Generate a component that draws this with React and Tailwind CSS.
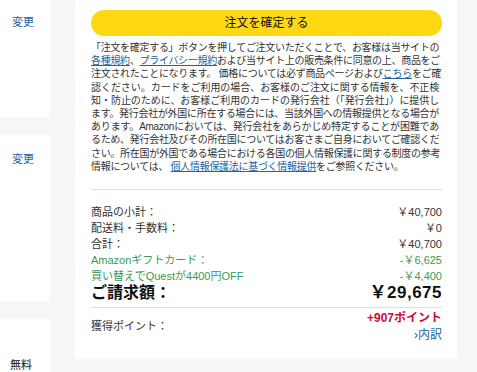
import React from "react";

const lines = [
    ["「注文を確定する」ボタンを押してご注文いただくことで、お客様は当サイトの"],
    [{ link: "各種規約" }, "、", { link: "プライバシー規約" }, "および当サイト上の販売条件に同意の上、商品をご"],
    ["注文されたことになります。 価格については必ず商品ページおよび", { link: "こちら" }, "をご確"],
    ["認ください。カードをご利用の場合、お客様のご注文に関する情報を、不正検"],
    ["知・防止のために、お客様ご利用のカードの発行会社（「発行会社」）に提供し"],
    ["ます。発行会社が外国に所在する場合には、当該外国への情報提供となる場合が"],
    ["あります。Amazonにおいては、発行会社をあらかじめ特定することが困難であ"],
    ["るため、発行会社及びその所在国についてはお客さまご自身においてご確認くだ"],
    ["さい。所在国が外国である場合における各国の個人情報保護に関する制度の参考"],
    ["情報については、 ", { link: "個人情報保護法に基づく情報提供" }, "をご参照ください。"],
];

const rows = [
    { label: "商品の小計：", value: "￥40,700" },
    { label: "配送料・手数料：", value: "￥0" },
    { label: "合計：", value: "￥40,700" },
    { label: "Amazonギフトカード：", value: "-￥6,625", green: true },
    { label: "買い替えでQuestが4400円OFF", value: "-￥4,400", green: true },
];

const App = () => {
    return (
        <div className="w-[477px] h-[372px] overflow-hidden bg-[#f7f7f7] flex font-['Liberation_Sans','Noto_Sans_CJK_JP',sans-serif] text-[#333]">
            {/* ---- left column ---- */}
            <div className="w-[50px] flex flex-col gap-[18px] shrink-0">
                <div className="h-[117px] shrink-0 bg-white pl-[12px] pt-[9px]">
                    <span className="text-[11px] text-[#2162a1]">変更</span>
                </div>
                <div className="h-[166px] shrink-0 bg-white pl-[12px] pt-[11px]">
                    <span className="text-[11px] text-[#2162a1]">変更</span>
                </div>
                <div className="h-[80px] shrink-0 bg-white pl-[10px] pt-[33px]">
                    <span className="text-[11px] leading-[14px] text-[#111]">無料</span>
                </div>
            </div>

            {/* ---- main panel ---- */}
            <div className="ml-[25px] w-[382px] h-[358px] bg-white pl-[16px] pr-[15px] pt-[10px] shrink-0">
                <button className="w-full h-[26px] rounded-full bg-[#ffd814] text-[12px] text-[#0f1111]">
                    注文を確定する
                </button>

                <div className="mt-[5px] pr-[3px] text-[10px] leading-[13.2px] tracking-[-0.3px] text-[#333]">
                    {lines.map((parts, i) => (
                        <div
                            key={i}
                            className={`whitespace-nowrap ${i < lines.length - 1 ? "text-justify [text-align-last:justify]" : ""}`}
                        >
                            {parts.map((p, j) =>
                                typeof p === "string" ? (
                                    <span key={j}>{p}</span>
                                ) : (
                                    <span key={j} className="text-[#2162a1] underline">{p.link}</span>
                                )
                            )}
                        </div>
                    ))}
                </div>

                <div className="mt-[16px] border-t border-[#ddd]" />

                <div className="mt-[14px] text-[11px]">
                    {rows.map(r => (
                        <div
                            key={r.label}
                            className={`flex justify-between h-[16px] items-center ${r.green ? "text-[#3a9a5c]" : "text-[#333]"}`}
                        >
                            <span>{r.label}</span>
                            <span>{r.value}</span>
                        </div>
                    ))}
                    <div className="flex justify-between items-center h-[18px] font-bold text-[#0f1111]">
                        <span className="text-[16px]">ご請求額：</span>
                        <span className="text-[17px] tracking-[0.5px]">￥29,675</span>
                    </div>
                </div>

                <div className="mt-[5px] border-t border-[#ddd]" />

                <div className="flex justify-between items-center mt-[2px]">
                    <span className="text-[11px] text-[#333]">獲得ポイント：</span>
                    <div className="flex flex-col items-end">
                        <span className="text-[12px] font-bold text-[#cc0c39] leading-[17px]">+907ポイント</span>
                        <span className="text-[12px] text-[#2162a1] leading-[16px]">›内訳</span>
                    </div>
                </div>
            </div>
        </div>
    );
};

export default App;
